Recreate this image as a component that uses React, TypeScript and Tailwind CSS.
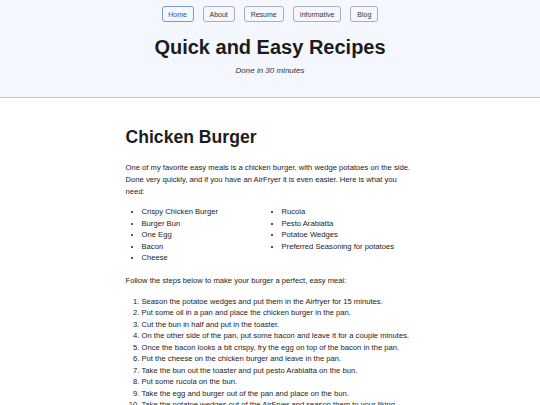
import React from 'react';

const navItems = ['Home', 'About', 'Resume', 'Informative', 'Blog'];

const ingredientsLeft = ['Crispy Chicken Burger', 'Burger Bun', 'One Egg', 'Bacon', 'Cheese'];
const ingredientsRight = ['Rucola', 'Pesto Arabiatta', 'Potatoe Wedges', 'Preferred Seasoning for potatoes'];

const steps = [
    'Season the potatoe wedges and put them in the Airfryer for 15 minutes.',
    'Put some oil in a pan and place the chicken burger in the pan.',
    'Cut the bun in half and put in the toaster.',
    'On the other side of the pan, put some bacon and leave it for a couple minutes.',
    'Once the bacon looks a bit crispy, fry the egg on top of the bacon in the pan.',
    'Put the cheese on the chicken burger and leave in the pan.',
    'Take the bun out the toaster and put pesto Arabiatta on the bun.',
    'Put some rucola on the bun.',
    'Take the egg and burger out of the pan and place on the bun.',
    'Take the potatoe wedges out of the AirFryer and season them to your liking.',
];

const App: React.FC = () => {
    return (
        <div className="min-h-[405px] bg-white text-[#1c1c1c] font-['Liberation_Sans',Arial,sans-serif] text-[7.65px] leading-[12px]">
            <header className="bg-[#f5f7ff] border-b border-[#c9c9d3] pt-[6px] pb-[20px] text-center">
                <nav className="flex justify-center gap-[9px]">
                    {navItems.map((item, i) => (
                        <a
                            key={item}
                            className={`h-[16px] px-[6px] flex items-center rounded-[3px] border text-[7px] leading-none ${
                                i === 0 ? 'border-[#7d96c8] text-[#2a56a0] w-[32px] justify-center' : 'border-[#a9adbd] text-[#333]'
                            } ${i === 1 ? 'w-[32px] justify-center' : ''}`}
                        >
                            {item}
                        </a>
                    ))}
                </nav>
                <h1 className="mt-[13px] text-[20px] leading-[24px] font-bold">Quick and Easy Recipes</h1>
                <p className="mt-[6px] italic text-[8px] text-[#333]">Done in 30 minutes</p>
            </header>
            <main className="w-[289px] mx-auto pt-[28px]">
                <h2 className="text-[17.6px] leading-[22px] font-bold">Chicken Burger</h2>
                <p className="mt-[14px]">
                    One of my favorite easy meals is a chicken burger, with wedge potatoes on the side. Done very quickly, and if you have an AirFryer it is even easier. Here is what you need:
                </p>
                <div className="mt-[8px] grid grid-cols-[140px_1fr] pl-[16px] leading-[11.5px]">
                    <ul className="list-disc marker:text-[7px]">
                        {ingredientsLeft.map(x => (
                            <li key={x}>{x}</li>
                        ))}
                    </ul>
                    <ul className="list-disc marker:text-[7px]">
                        {ingredientsRight.map(x => (
                            <li key={x}>{x}</li>
                        ))}
                    </ul>
                </div>
                <p className="mt-[11px]">Follow the steps below to make your burger a perfect, easy meal:</p>
                <ol className="mt-[9px] list-decimal pl-[16px] leading-[11.5px]">
                    {steps.map(s => (
                        <li key={s}>{s}</li>
                    ))}
                </ol>
            </main>
        </div>
    );
};

export default App;
